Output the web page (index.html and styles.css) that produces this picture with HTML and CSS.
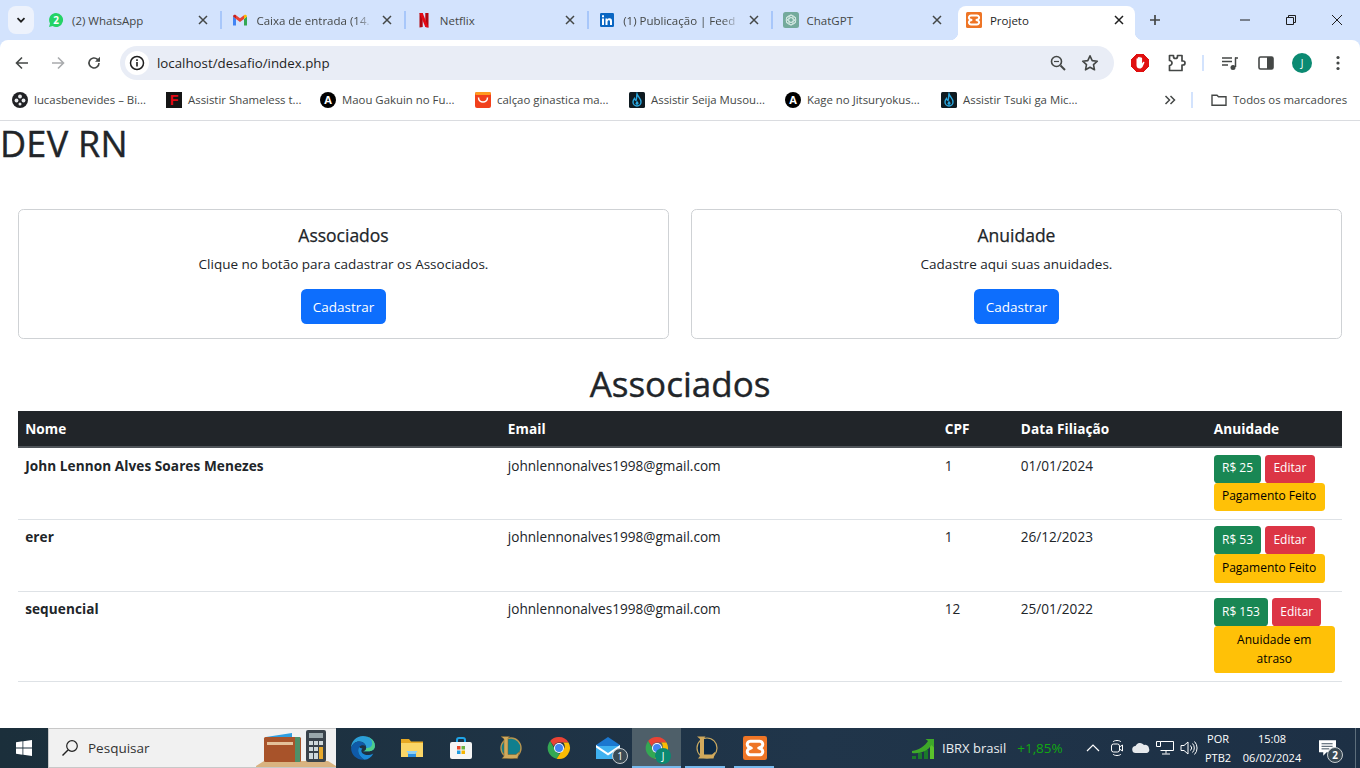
FILE: index.html
```html
<!DOCTYPE html>
<html lang="pt-BR">
<head>
  <meta charset="UTF-8">
  <title>Projeto</title>
  <link rel="stylesheet" href="styles.css">
</head>
<body>
  <svg class="defs" aria-hidden="true">
    <symbol id="i-chrome" viewBox="0 0 24 24">
      <path fill="#ea4335" d="M12 1a11 11 0 0 1 9.530 5.500H12a5.500 5.500 0 0 0-5.200 3.700L3.100 5A11 11 0 0 1 12 1z"/>
      <path fill="#34a853" d="M3.100 5l4.300 7.600A5.500 5.500 0 0 0 13 17.400L9.600 22.700A11 11 0 0 1 3.100 5z"/>
      <path fill="#fbbc04" d="M21.500 6.500A11 11 0 0 1 9.600 22.700l4.700-7.300a5.500 5.500 0 0 0 1.900-8.900z"/>
      <circle cx="12" cy="12" r="5" fill="#fff"/>
      <circle cx="12" cy="12" r="4" fill="#4285f4"/>
    </symbol>
    <symbol id="i-fire" viewBox="0 0 16 16">
      <rect width="16" height="16" rx="1.500" fill="#0e1a20"/>
      <path fill="none" stroke="#2aa8e0" stroke-width="1.400" d="M8 2c1 3 4 4.500 4 8a4 4 0 0 1-8 0c0-1.500.7-2.500 1.500-3.500C6 8 6.500 8.500 7 8.500 8 6.500 7.500 4 8 2z"/>
      <path fill="#2aa8e0" d="M8 8.500c.5 1.500 2 2 1.500 3.500-.3 1-2.700 1-3 0-.3-1 1-2 1.500-3.500z"/>
    </symbol>
    <symbol id="i-xampp" viewBox="0 0 16 16">
      <rect width="16" height="16" rx="1.500" fill="#ee7526"/>
      <path fill="none" stroke="#fff" stroke-width="2" stroke-linejoin="round" d="M5 3.500h6a2.100 2.100 0 0 1 1.500 3.600L10.500 8l2 .9A2.100 2.100 0 0 1 11 12.500H5a2.100 2.100 0 0 1-1.500-3.600l2-.9-2-.9A2.100 2.100 0 0 1 5 3.500z"/>
    </symbol>
    <symbol id="i-x" viewBox="0 0 12 12">
      <path stroke="currentColor" stroke-width="1.500" d="M2 2l8 8M10 2l-8 8"/>
    </symbol>
  </svg>

  <header class="browser">
    <div class="tabstrip">
      <button class="tab-list">
        <svg width="10" height="10" viewBox="0 0 10 10"><path fill="none" stroke="#1f1f1f" stroke-width="1.700" d="M1.500 3.200L5 6.700l3.500-3.500"/></svg>
      </button>
      <div class="tabs">
        <div class="tab tab-first">
          <svg class="fav" viewBox="0 0 16 16"><path fill="#25d366" d="M8 1a7 7 0 1 1-3.400 13.100L1 15l1-3.500A7 7 0 0 1 8 1z"/><text x="8" y="11.500" class="fav-num">2</text></svg>
          <span class="tab-title">(2) WhatsApp</span>
          <svg class="tab-x"><use href="#i-x"/></svg>
        </div>
        <div class="tab">
          <svg class="fav" viewBox="0 0 16 16"><path fill="#4285f4" d="M1 4.500v9h3V7z"/><path fill="#34a853" d="M12 7v6.500h3v-9z"/><path fill="#ea4335" d="M4 7V3.200L8 6.300l4-3.100V7L8 10z"/><path fill="#c5221f" d="M1 4.500C1 3 2.800 2.300 4 3.200V7z"/><path fill="#fbbc04" d="M12 3.200c1.200-.9 3-.2 3 1.300L12 7z"/></svg>
          <span class="tab-title tab-fade">Caixa de entrada (14.</span>
          <svg class="tab-x"><use href="#i-x"/></svg>
        </div>
        <div class="tab">
          <svg class="fav" viewBox="0 0 16 16"><path fill="#b1060f" d="M3.500 1h3.200v14l-3.200.4zM9.300 1h3.200v14.400l-3.200-.4z"/><path fill="#e50914" d="M3.500 1h3.200l5.800 14.400-3.200-.4z"/></svg>
          <span class="tab-title">Netflix</span>
          <svg class="tab-x"><use href="#i-x"/></svg>
        </div>
        <div class="tab">
          <svg class="fav" viewBox="0 0 16 16"><rect x="1" y="1" width="14" height="14" rx="1.200" fill="#0a66c2"/><path fill="#fff" d="M3 6.500h2V13H3zM3 3.300h2v2H3zM6.500 6.500h1.900v.9c.4-.6 1.100-1.100 2.100-1.100 1.900 0 2.500 1.200 2.500 3V13h-2V9.700c0-.9-.3-1.500-1.100-1.500s-1.400.6-1.400 1.500V13h-2z"/></svg>
          <span class="tab-title tab-fade">(1) Publicação | Feed</span>
          <svg class="tab-x"><use href="#i-x"/></svg>
        </div>
        <div class="tab">
          <svg class="fav" viewBox="0 0 16 16"><rect width="16" height="16" rx="2.500" fill="#74aa9c"/><g fill="none" stroke="#d8ebe5" stroke-width=".9"><circle cx="8" cy="8" r="4.800"/><ellipse cx="8" cy="8" rx="5" ry="2.200" transform="rotate(30 8 8)"/><ellipse cx="8" cy="8" rx="5" ry="2.200" transform="rotate(90 8 8)"/><ellipse cx="8" cy="8" rx="5" ry="2.200" transform="rotate(150 8 8)"/></g></svg>
          <span class="tab-title">ChatGPT</span>
          <svg class="tab-x"><use href="#i-x"/></svg>
        </div>
        <div class="tab tab-active">
          <svg class="fav"><use href="#i-xampp"/></svg>
          <span class="tab-title">Projeto</span>
          <svg class="tab-x"><use href="#i-x"/></svg>
        </div>
      </div>
      <div class="new-tab">
        <svg width="12" height="12" viewBox="0 0 12 12"><path stroke="#444746" stroke-width="1.700" d="M6 1v10M1 6h10"/></svg>
      </div>
      <div class="win-controls">
        <div class="win-btn"><svg width="12" height="12" viewBox="0 0 12 12"><path stroke="#1f1f1f" d="M1 6h10"/></svg></div>
        <div class="win-btn"><svg width="12" height="12" viewBox="0 0 12 12"><path fill="none" stroke="#1f1f1f" d="M1.500 3.500h7v7h-7zM3.500 3.500v-2h7v7h-2"/></svg></div>
        <div class="win-btn"><svg width="12" height="12" viewBox="0 0 12 12"><path stroke="#1f1f1f" d="M1 1l10 10M11 1L1 11"/></svg></div>
      </div>
    </div>

    <div class="toolbar">
      <div class="nav-btn"><svg width="16" height="16" viewBox="0 0 16 16"><path fill="none" stroke="#444746" stroke-width="1.600" d="M14 8H2.500M8 2.500L2.500 8 8 13.500"/></svg></div>
      <div class="nav-btn"><svg width="16" height="16" viewBox="0 0 16 16"><path fill="none" stroke="#a9abad" stroke-width="1.600" d="M2 8h11.500M8 2.500L13.500 8 8 13.500"/></svg></div>
      <div class="nav-btn"><svg width="16" height="16" viewBox="0 0 16 16"><path fill="none" stroke="#444746" stroke-width="1.600" d="M13 8a5 5 0 1 1-1.500-3.600L13 6"/><path fill="#444746" d="M14 1.800v5h-5z"/></svg></div>
      <div class="omnibox">
        <div class="site-info"><svg width="16" height="16" viewBox="0 0 16 16"><circle cx="8" cy="8" r="6.500" fill="none" stroke="#1f1f1f" stroke-width="1.500"/><path stroke="#1f1f1f" stroke-width="1.600" d="M8 7v4.500M8 4.300v1.600"/></svg></div>
        <span class="url">localhost/desafio/index.php</span>
        <svg class="omni-icon" width="18" height="18" viewBox="0 0 18 18"><circle cx="7.500" cy="7.500" r="5" fill="none" stroke="#444746" stroke-width="1.600"/><path stroke="#444746" stroke-width="2" d="M11.500 11.500L16 16"/><path stroke="#444746" stroke-width="1.200" d="M5 7.500h5"/></svg>
        <svg class="omni-icon" width="18" height="18" viewBox="0 0 18 18"><path fill="none" stroke="#444746" stroke-width="1.600" stroke-linejoin="round" d="M9 1.800l2.200 4.800 5.100.6-3.800 3.500 1 5.100L9 13.300l-4.500 2.500 1-5.100-3.800-3.500 5.100-.6z"/></svg>
      </div>
      <div class="tool-icons">
        <svg class="tool-ext" width="18" height="18" viewBox="0 0 18 18"><path fill="#e01010" d="M6 0h6l6 6v6l-6 6H6l-6-6V6z" stroke="#e01010" stroke-linejoin="round"/><path fill="#fff" d="M5.500 8V5c0-1 1.300-1 1.300 0V3.800c0-1 1.400-1 1.400 0v-.4c0-1 1.500-1 1.500 0v.8c0-1 1.400-1 1.400 0v5.300l1-1.400c.7-.8 1.800 0 1.200.9L11.500 13c-.6.900-1.500 1.500-2.700 1.500-2 0-3.300-1.300-3.300-3.300z"/></svg>
        <svg class="tool-puzzle" width="20" height="20" viewBox="0 0 20 20"><path fill="none" stroke="#444746" stroke-width="1.700" stroke-linejoin="round" d="M3.500 2.500h4v1a2 2 0 0 0 4 0v-1h4.500v5.500h1a2 2 0 0 1 0 4h-1v5.500H3.500v-5a2 2 0 0 0 0-5z"/></svg>
        <span class="tool-sep"></span>
        <svg class="tool-media" width="18" height="18" viewBox="0 0 18 18"><path stroke="#444746" stroke-width="1.500" d="M1 4h10M1 7.500h10M1 11h6"/><path fill="none" stroke="#444746" stroke-width="1.500" d="M14.500 3.500V13"/><circle cx="12" cy="13.500" r="2.500" fill="#444746"/><path stroke="#444746" stroke-width="1.500" d="M14 4h3"/></svg>
        <svg class="tool-side" width="16" height="16" viewBox="0 0 16 16"><rect x="1" y="2" width="14" height="12" rx="1.500" fill="none" stroke="#444746" stroke-width="1.600"/><path fill="#444746" d="M9 2h6v12H9z"/></svg>
        <span class="avatar">J</span>
        <svg class="tool-menu" width="4" height="16" viewBox="0 0 4 16"><circle cx="2" cy="2.500" r="1.600" fill="#444746"/><circle cx="2" cy="8" r="1.600" fill="#444746"/><circle cx="2" cy="13.500" r="1.600" fill="#444746"/></svg>
      </div>
    </div>

    <nav class="bookmarks">
      <a class="bm bm-1">
        <svg class="fav" viewBox="0 0 16 16"><circle cx="8" cy="8" r="8" fill="#202124"/><g fill="#e8eaed"><circle cx="8" cy="4.500" r="1.900"/><circle cx="4.500" cy="8.500" r="1.900"/><circle cx="11.500" cy="8.500" r="1.900"/><circle cx="8" cy="12" r="1.500"/></g></svg>
        <span>lucasbenevides – Bi...</span>
      </a>
      <a class="bm bm-2">
        <svg class="fav" viewBox="0 0 16 16"><rect width="16" height="16" fill="#151515"/><text x="8" y="13" class="fav-f">F</text></svg>
        <span>Assistir Shameless t...</span>
      </a>
      <a class="bm bm-3">
        <svg class="fav" viewBox="0 0 16 16"><circle cx="8" cy="8" r="8" fill="#000"/><text x="8" y="12" class="fav-a">A</text></svg>
        <span>Maou Gakuin no Fu...</span>
      </a>
      <a class="bm bm-4">
        <svg class="fav" viewBox="0 0 16 16"><rect width="16" height="16" rx="2" fill="#f1401c"/><rect width="16" height="3" rx="1.500" fill="#ff9a1f"/><path fill="none" stroke="#fff" stroke-width="1.500" d="M3.500 5.500c0 6 9 6 9 0"/></svg>
        <span>calçao ginastica ma...</span>
      </a>
      <a class="bm bm-5">
        <svg class="fav"><use href="#i-fire"/></svg>
        <span>Assistir Seija Musou...</span>
      </a>
      <a class="bm bm-6">
        <svg class="fav" viewBox="0 0 16 16"><circle cx="8" cy="8" r="8" fill="#000"/><text x="8" y="12" class="fav-a">A</text></svg>
        <span>Kage no Jitsuryokus...</span>
      </a>
      <a class="bm bm-7">
        <svg class="fav"><use href="#i-fire"/></svg>
        <span>Assistir Tsuki ga Mic...</span>
      </a>
      <svg class="bm-more" width="12" height="12" viewBox="0 0 12 12"><path fill="none" stroke="#444746" stroke-width="1.500" d="M1.500 2l4 4-4 4M6.500 2l4 4-4 4"/></svg>
      <span class="bm-sep"></span>
      <a class="bm bm-all">
        <svg class="fav" viewBox="0 0 16 16"><path fill="none" stroke="#444746" stroke-width="1.400" d="M1 3.200h5l1.500 1.600H15v8.500H1z"/></svg>
        <span>Todos os marcadores</span>
      </a>
    </nav>
  </header>

  <main class="page">
    <h1 class="brand">DEV RN</h1>

    <section class="cards">
      <div class="card">
        <h5 class="card-title">Associados</h5>
        <p class="card-text">Clique no botão para cadastrar os Associados.</p>
        <a class="btn btn-primary">Cadastrar</a>
      </div>
      <div class="card">
        <h5 class="card-title">Anuidade</h5>
        <p class="card-text">Cadastre aqui suas anuidades.</p>
        <a class="btn btn-primary">Cadastrar</a>
      </div>
    </section>

    <h2 class="section-title">Associados</h2>

    <div class="table-wrap">
      <table class="table">
        <colgroup>
          <col class="col-nome"><col class="col-email"><col class="col-cpf"><col class="col-data"><col class="col-anuidade">
        </colgroup>
        <thead>
          <tr><th>Nome</th><th>Email</th><th>CPF</th><th>Data Filiação</th><th>Anuidade</th></tr>
        </thead>
        <tbody>
          <tr>
            <th>John Lennon Alves Soares Menezes</th>
            <td>johnlennonalves1998@gmail.com</td>
            <td>1</td>
            <td>01/01/2024</td>
            <td>
              <div class="actions">
                <a class="btn btn-sm btn-success">R$ 25</a>
                <a class="btn btn-sm btn-danger">Editar</a>
                <a class="btn btn-sm btn-warning">Pagamento Feito</a>
              </div>
            </td>
          </tr>
          <tr>
            <th>erer</th>
            <td>johnlennonalves1998@gmail.com</td>
            <td>1</td>
            <td>26/12/2023</td>
            <td>
              <div class="actions">
                <a class="btn btn-sm btn-success">R$ 53</a>
                <a class="btn btn-sm btn-danger">Editar</a>
                <a class="btn btn-sm btn-warning">Pagamento Feito</a>
              </div>
            </td>
          </tr>
          <tr>
            <th>sequencial</th>
            <td>johnlennonalves1998@gmail.com</td>
            <td>12</td>
            <td>25/01/2022</td>
            <td>
              <div class="actions">
                <a class="btn btn-sm btn-success">R$ 153</a>
                <a class="btn btn-sm btn-danger">Editar</a>
                <a class="btn btn-sm btn-warning">Anuidade em atraso</a>
              </div>
            </td>
          </tr>
        </tbody>
      </table>
    </div>
  </main>

  <footer class="taskbar">
    <div class="start">
      <svg width="16" height="16" viewBox="0 0 16 16"><path fill="#fff" d="M0 2.200l6.500-.9v6.300H0zM7.300 1.200L16 0v7.600H7.300zM0 8.400h6.500v6.300L0 13.800zM7.300 8.400H16V16l-8.700-1.200z"/></svg>
    </div>
    <div class="search">
      <svg width="18" height="18" viewBox="0 0 18 18"><circle cx="11" cy="7" r="5.300" fill="none" stroke="#222" stroke-width="1.200"/><path stroke="#222" stroke-width="1.400" d="M7 11l-5.500 5.500"/></svg>
      <span class="search-text">Pesquisar</span>
      <svg class="search-art" width="80" height="40" viewBox="0 0 80 40">
        <path fill="#d9b380" d="M8 33h64l8 5v2H0v-2z"/>
        <rect x="8" y="9" width="37" height="25" rx="1.500" fill="#a8532a"/>
        <path fill="#2f9ee0" d="M10 9l26-4v4z"/>
        <rect x="11" y="14" width="26" height="3" fill="#e4c19a"/>
        <rect x="39" y="9" width="5" height="25" fill="#4f8f68"/>
        <rect x="50" y="2" width="20" height="32" rx="2" fill="#39424a"/>
        <rect x="53" y="5" width="14" height="5" fill="#9aa7ab"/>
        <g fill="#cfd8da"><rect x="53" y="13" width="4" height="4"/><rect x="58" y="13" width="4" height="4"/><rect x="63" y="13" width="4" height="4"/><rect x="53" y="19" width="4" height="4"/><rect x="58" y="19" width="4" height="4"/><rect x="53" y="25" width="4" height="6"/><rect x="58" y="25" width="4" height="6"/></g>
        <rect x="63" y="19" width="4" height="12" fill="#e8a92c"/>
      </svg>
    </div>

    <div class="task-apps">
      <div class="app">
        <svg width="26" height="26" viewBox="0 0 24 24"><path fill="#2b9fd8" d="M12 1C5.900 1 1 5.900 1 12c1-3.500 4-6 7.500-6 4 0 6.500 3 6.500 6 0 2-1.500 3-3 3h6c2.500 0 5-1.800 5-5C23 4.500 17.500 1 12 1z"/><path fill="#4fd08a" d="M23 10c0-5.500-5.500-9-11-9 5 0 8.500 3 8.500 6.500 0 3-2.500 4.500-5.500 4.500 0 2-1.500 3-3 3h6c2.500 0 5-1.800 5-5z"/><path fill="#0f5aa8" d="M1 12c1-3.500 4-6 7.500-6 3 0 5.500 1.800 6.200 4.500C13 8.800 10 9 8.500 11 6 14.500 8.500 20 13.500 22.900 6.500 23.500 1 18.500 1 12z"/><path fill="#1b8ad8" d="M8.500 11c-2.500 3.500 0 9 5 11.900 3.500-.5 6.500-2.700 8-5.900-5 3-11 1-11-2.500 0-1 .5-1.500 1-2-1.500-.5-2.500-.7-3-1.500z"/></svg>
      </div>
      <div class="app">
        <svg width="24" height="24" viewBox="0 0 24 24"><path fill="#e8a923" d="M1 3h8l2 2.500h12V9H1z"/><path fill="#fbd667" d="M1 7h22v14H1z"/><path fill="#2d8fe0" d="M8 15h8v6H8z"/><path fill="#8fd0f5" d="M6.500 15H17.500l-2 3H8.500z"/></svg>
      </div>
      <div class="app">
        <svg width="24" height="24" viewBox="0 0 24 24"><path fill="none" stroke="#1fa5e8" stroke-width="2" d="M8 7V4a2 2 0 0 1 2-2h4a2 2 0 0 1 2 2v3"/><rect x="1" y="6" width="22" height="17" rx="2" fill="#f5f5f5"/><path fill="#e8492b" d="M8 10h3.500v3.500H8z"/><path fill="#6db33f" d="M12.500 10H16v3.500h-3.500z"/><path fill="#1f9be0" d="M8 14.500h3.500V18H8z"/><path fill="#f5b400" d="M12.500 14.500H16V18h-3.500z"/></svg>
      </div>
      <div class="app">
        <svg width="24" height="26" viewBox="0 0 24 26"><circle cx="13" cy="13" r="10" fill="#0f7f8e" stroke="#b8954f" stroke-width="1.400"/><path fill="#d0a95c" stroke="#7a5c28" stroke-width=".5" d="M3 1.500h8.500L10 3.500v16h8l3.500-3-2 7H4l2-2.500V4z"/></svg>
      </div>
      <div class="app">
        <svg width="24" height="24"><use href="#i-chrome"/></svg>
      </div>
      <div class="app">
        <svg width="26" height="26" viewBox="0 0 26 26"><path fill="#1b78d0" d="M1 10L13 2l12 8v2H1z"/><path fill="#3fb1f0" d="M1 11h24v13H1z"/><path fill="#fff" d="M1 10l12 8 12-8v2.500l-12 8-12-8z"/></svg>
        <span class="app-badge">1</span>
      </div>
      <div class="app app-active app-open">
        <svg width="24" height="24"><use href="#i-chrome"/></svg>
        <span class="app-avatar">J</span>
      </div>
      <div class="app app-open">
        <svg width="24" height="26" viewBox="0 0 24 26"><circle cx="13" cy="13" r="10" fill="#0d2a45" stroke="#c8a860" stroke-width="1.200"/><path fill="#d0a95c" d="M3 1.500h8.500L10 3.500v16h8l3.500-3-2 7H4l2-2.500V4z"/></svg>
      </div>
      <div class="app app-open">
        <svg width="24" height="24"><use href="#i-xampp"/></svg>
      </div>
    </div>

    <div class="tray">
      <div class="widget">
        <svg width="24" height="24" viewBox="0 0 24 24"><path fill="#1a7a2a" d="M1 20h4v3H1zM7 17h4v6H7zM13 14h4v9h-4z"/><path fill="#5bc22b" d="M19 8h4v15h-4z"/><path fill="#3ea829" d="M1 15C8 14 14 10 17 5l-2.500-2H23v8.500L20.500 9C17 15 9 18 1 17z"/></svg>
        <span class="widget-name">IBRX brasil</span>
        <span class="widget-val">+1,85%</span>
      </div>
      <div class="tray-icons">
        <svg width="16" height="16" viewBox="0 0 16 16"><path fill="none" stroke="#fff" stroke-width="1.200" d="M2 11l6-6 6 6"/></svg>
        <svg width="16" height="18" viewBox="0 0 16 18"><path fill="none" stroke="#fff" d="M4 3c1-2 7-2 8 0M4 15c1 2 7 2 8 0"/><rect x="2.500" y="5" width="8" height="8" rx="2" fill="none" stroke="#fff"/><path fill="none" stroke="#fff" d="M10.500 8l3-2v6l-3-2"/></svg>
        <svg width="18" height="14" viewBox="0 0 18 14"><path fill="#e6e9ec" d="M4 12a3.500 3.500 0 0 1-.5-7A5 5 0 0 1 12 4a3.800 3.800 0 0 1 5 3.500c1 2.500-.5 4.500-2.500 4.500z"/></svg>
        <svg width="18" height="16" viewBox="0 0 18 16"><path fill="none" stroke="#fff" d="M4.500 1.500h13v9h-13M10 10.500v3M6 14h8M.5 1.500h4v5h-4z"/></svg>
        <svg width="18" height="16" viewBox="0 0 18 16"><path fill="none" stroke="#fff" d="M1 5.500h3L8 2v12l-4-3.500H1zM10.500 5.500a3.500 3.500 0 0 1 0 5M12.500 3.500a6.500 6.500 0 0 1 0 9M14.500 1.500a9.500 9.500 0 0 1 0 13"/></svg>
      </div>
      <div class="tray-lang"><span>POR</span><span>PTB2</span></div>
      <div class="tray-clock"><span>15:08</span><span>06/02/2024</span></div>
      <div class="tray-notif">
        <svg width="17" height="16" viewBox="0 0 20 18"><path fill="#fff" d="M0 0h20v14H9l-4 4v-4H0z"/><path stroke="#1e3242" d="M3 4h13M3 7h13M3 10h9"/></svg>
        <span class="notif-badge">2</span>
      </div>
      <span class="show-desktop"></span>
    </div>
  </footer>
</body>
</html>
```

FILE: styles.css
```css
* {
  box-sizing: border-box;
}

html, body {
  height: 100%;
}

body {
  margin: 0;
  display: flex;
  flex-direction: column;
  overflow: hidden;
  font-family: "Open Sans", "Noto Sans", sans-serif;
  background: #fff;
  color: #212529;
}

.defs {
  display: block;
  width: 0;
  height: 0;
}

/* browser chrome */
.browser {
  flex: none;
  background: #d3e3fd;
  color: #1f1f1f;
}

.tabstrip {
  display: flex;
  height: 40px;
  padding-left: 8px;
}

.tab-list {
  flex: none;
  width: 26px;
  height: 28px;
  margin-top: 6px;
  padding: 0;
  border: none;
  border-radius: 8px;
  background: #edf2fc;
  display: flex;
  align-items: center;
  justify-content: center;
}

.tabs {
  display: flex;
  margin-left: 3px;
  width: 1101px;
}

.tab {
  position: relative;
  flex: none;
  width: 183.4px;
  height: 40px;
  padding: 0 12px 0 11px;
  display: flex;
  align-items: center;
  font-size: 11.5px;
  color: #444746;
}

.tab-first {
  width: 184.4px;
}

.tab::after {
  content: "";
  position: absolute;
  right: -1px;
  top: 11px;
  height: 18px;
  width: 2px;
  background: #a8c7fa;
}

.tab:nth-child(5)::after {
  display: none;
}

.tab-active {
  width: 177px;
  margin: 6px 0 0 3px;
  height: 34px;
  padding: 0 10px 6px 8px;
  background: #fff;
  border-radius: 8px 8px 0 0;
  color: #1f1f1f;
}

.tab-active::before {
  content: "";
  position: absolute;
  left: -8px;
  bottom: 0;
  width: 8px;
  height: 8px;
  background: radial-gradient(circle at 0 0, transparent 8px, #fff 8.5px);
}

.tab-active::after {
  right: -8px;
  top: auto;
  bottom: 0;
  width: 8px;
  height: 8px;
  background: radial-gradient(circle at 100% 0, transparent 8px, #fff 8.5px);
}

.fav {
  flex: none;
  width: 16px;
  height: 16px;
}

.fav-num {
  font: bold 10px "Open Sans", sans-serif;
  fill: #fff;
  text-anchor: middle;
}

.fav-f {
  font: bold 14px "Liberation Sans", sans-serif;
  fill: #e50914;
  text-anchor: middle;
}

.fav-a {
  font: bold 11px "Open Sans", sans-serif;
  fill: #fff;
  text-anchor: middle;
}

.tab-title {
  flex: 1;
  min-width: 0;
  margin-left: 8px;
  white-space: nowrap;
}

.tab-fade {
  -webkit-mask-image: linear-gradient(90deg, #000 85%, transparent);
  mask-image: linear-gradient(90deg, #000 85%, transparent);
}

.tab-x {
  flex: none;
  width: 12px;
  height: 12px;
  margin-left: 8px;
  color: #444746;
}

.tab-active .tab-x {
  color: #1f1f1f;
}

.new-tab {
  flex: none;
  width: 34px;
  display: flex;
  align-items: center;
  justify-content: center;
}

.win-controls {
  margin-left: auto;
  display: flex;
}

.win-btn {
  width: 46px;
  display: flex;
  align-items: center;
  justify-content: center;
}

.toolbar {
  height: 46px;
  background: #fff;
  border-radius: 8px 8px 0 0;
  display: flex;
  align-items: flex-start;
  padding: 6px 0 0 4px;
}

.nav-btn {
  flex: none;
  width: 36px;
  height: 34px;
  display: flex;
  align-items: center;
  justify-content: center;
}

.omnibox {
  flex: none;
  width: 994px;
  height: 34px;
  margin-left: 8px;
  border-radius: 17px;
  background: #e9edf6;
  display: flex;
  align-items: center;
  padding: 0 15px 0 5px;
}

.site-info {
  flex: none;
  width: 24px;
  height: 24px;
  border-radius: 50%;
  background: #fff;
  display: flex;
  align-items: center;
  justify-content: center;
}

.url {
  flex: 1;
  margin-left: 8px;
  font-size: 13.3px;
  color: #1f1f1f;
}

.omni-icon {
  flex: none;
  margin-left: 14px;
}

.tool-icons {
  flex: 1;
  height: 34px;
  display: flex;
  align-items: center;
  padding-left: 17px;
}

.tool-puzzle {
  margin-left: 17px;
}

.tool-sep {
  width: 2px;
  height: 16px;
  margin: 0 17px 0 16px;
  background: #d3e3fd;
}

.tool-side {
  margin-left: 19px;
}

.avatar {
  flex: none;
  width: 20px;
  height: 20px;
  margin-left: 18px;
  border-radius: 50%;
  background: #0b8a72;
  color: #fff;
  font-size: 10px;
  line-height: 20px;
  text-align: center;
}

.tool-menu {
  margin-left: 24px;
}

.bookmarks {
  height: 35px;
  padding: 0 0 7px 12px;
  background: #fff;
  border-bottom: 1px solid #dadce0;
  display: flex;
  align-items: center;
  font-size: 11.4px;
  color: #444746;
}

.bm {
  flex: none;
  display: flex;
  align-items: center;
  gap: 6px;
  white-space: nowrap;
}

.bm-1 { width: 154px; }
.bm-2 { width: 154px; }
.bm-3 { width: 155px; }
.bm-4 { width: 154px; }
.bm-5 { width: 156px; }
.bm-6 { width: 156px; }
.bm-7 { width: 223px; }

.bm-more {
  flex: none;
}

.bm-sep {
  flex: none;
  width: 2px;
  height: 16px;
  margin: 0 18px 0 15px;
  background: #d3e3fd;
}

/* page */
.page {
  flex: 1;
  min-height: 0;
  background: #fff;
}

.brand {
  margin: 0 0 44px;
  padding-top: 1px;
  font-size: 36px;
  line-height: 43px;
  font-weight: 400;
  letter-spacing: .25px;
  -webkit-text-stroke: .4px #212529;
}

.cards {
  display: flex;
  gap: 22px;
  padding: 0 18px;
}

.card {
  flex: 1;
  height: 130px;
  padding: 15.4px 14.4px 14.4px;
  border: 1px solid #cfd2d5;
  border-radius: 5.4px;
  text-align: center;
}

.card-title {
  margin: 0 0 7.2px;
  font-size: 17.5px;
  line-height: 21.6px;
  font-weight: 400;
  -webkit-text-stroke: .25px #212529;
}

.card-text {
  margin: 0 0 13.4px;
  font-size: 13.5px;
  line-height: 21.6px;
}

.btn {
  display: inline-block;
  padding: 6.4px 10.3px 4.4px;
  border-radius: 5.4px;
  border: 1px solid transparent;
  font-size: 13.5px;
  line-height: 21.6px;
  text-align: center;
}

.btn-primary {
  background: #0d6efd;
  color: #fff;
}

.btn-sm {
  padding: 3.6px 7.2px;
  border-radius: 3.6px;
  font-size: 12px;
  line-height: 18.9px;
}

.btn-success { background: #198754; color: #fff; }
.btn-danger { background: #dc3545; color: #fff; }
.btn-warning { background: #ffc107; color: #000; }

.section-title {
  margin: 23px 0 6.2px;
  font-size: 35px;
  line-height: 43.2px;
  font-weight: 400;
  text-align: center;
  -webkit-text-stroke: .4px #212529;
}

.table-wrap {
  padding: 0 18px;
}

.table {
  width: 100%;
  table-layout: fixed;
  border-collapse: collapse;
  font-size: 13.6px;
  line-height: 21.6px;
}

.col-nome { width: 482.6px; }
.col-email { width: 437px; }
.col-cpf { width: 76px; }
.col-data { width: 193px; }
.col-anuidade { width: 135.4px; }

.table th,
.table td {
  padding: 6.4px 7.2px 8px;
  text-align: left;
  vertical-align: top;
  font-weight: normal;
}

.table th {
  font-weight: 700;
  letter-spacing: .07px;
}

.table thead th {
  background: #212529;
  color: #fff;
  padding-bottom: 7px;
  border-bottom: 2px solid #50555a;
}

.table tbody tr {
  border-bottom: 1px solid #dee2e6;
}

.actions {
  display: flex;
  flex-wrap: wrap;
  column-gap: 4px;
  width: 121px;
}

/* windows taskbar */
.taskbar {
  flex: none;
  height: 40px;
  background: linear-gradient(90deg, #1b2f3b, #20354a 60%, #1d3045);
  display: flex;
  color: #fff;
}

.start {
  flex: none;
  width: 48px;
  display: flex;
  align-items: center;
  justify-content: center;
}

.search {
  flex: none;
  width: 288px;
  display: flex;
  align-items: center;
  padding-left: 12px;
  background: #f1f1f1;
  border: 1px solid #c8c8c8;
  border-right: none;
  overflow: hidden;
}

.search-text {
  flex: 1;
  margin-left: 9px;
  font-size: 13.5px;
  color: #333;
}

.search-art {
  flex: none;
}

.task-apps {
  flex: none;
  display: flex;
  margin-left: 2px;
}

.app {
  position: relative;
  flex: none;
  width: 49px;
  display: flex;
  align-items: center;
  justify-content: center;
}

.app-open::after {
  content: "";
  position: absolute;
  left: 4px;
  right: 5px;
  bottom: 0;
  height: 2px;
  background: #76b9ed;
}

.app-active {
  background: #4e5f69;
}

.app-active::after {
  left: 0;
  right: 0;
}

.app-badge,
.app-avatar {
  position: absolute;
  right: 4px;
  bottom: 4px;
  width: 16px;
  height: 16px;
  border-radius: 50%;
  font-size: 10px;
  line-height: 14px;
  text-align: center;
}

.app-badge {
  background: #3a4a55;
  border: 1px solid #c8cdd0;
}

.app-avatar {
  right: 10px;
  background: #0b8a72;
  line-height: 16px;
}

.tray {
  flex: 1;
  display: flex;
  align-items: center;
  justify-content: flex-end;
  font-size: 11px;
}

.widget {
  flex: none;
  display: flex;
  align-items: center;
  width: 170px;
}

.widget-name {
  margin-left: 7px;
  font-size: 13px;
  color: #e8ecef;
}

.widget-val {
  margin-left: 11px;
  font-size: 13.5px;
  color: #12a812;
}

.tray-icons {
  flex: none;
  display: grid;
  grid-template-columns: repeat(5, 24px);
  justify-items: center;
  align-items: center;
  width: 120px;
}

.tray-lang,
.tray-clock {
  flex: none;
  display: flex;
  flex-direction: column;
  align-items: center;
  line-height: 19px;
}

.tray-lang {
  width: 30px;
  margin-left: 2px;
}

.tray-clock {
  width: 66px;
  margin-left: 6px;
}

.tray-notif {
  position: relative;
  flex: none;
  width: 46px;
  margin-left: 4px;
  padding-right: 10px;
  display: flex;
  justify-content: center;
}

.notif-badge {
  position: absolute;
  right: 12px;
  bottom: -7px;
  width: 16px;
  height: 16px;
  border-radius: 50%;
  background: #3a4a55;
  border: 1px solid #c8cdd0;
  font-size: 10px;
  line-height: 14px;
  font-weight: 700;
  text-align: center;
}

.show-desktop {
  flex: none;
  align-self: stretch;
  width: 5px;
  border-left: 1px solid #5d6e7b;
}
```
